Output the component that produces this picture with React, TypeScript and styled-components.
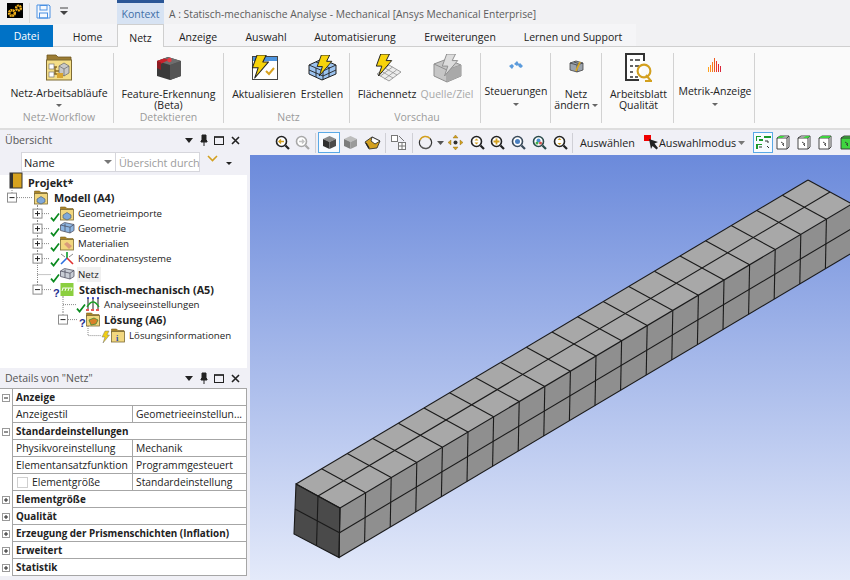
import React from "react";
import styled, { createGlobalStyle } from "styled-components";

const Global = createGlobalStyle`
  html, body { margin: 0; padding: 0; width: 850px; height: 580px; overflow: hidden; background: #f0f0f6; }
  body { font-family: "Open Sans", "Noto Sans", "Liberation Sans", sans-serif; font-size: 11px; color: #222; }
  * { box-sizing: border-box; }
`;

const Page = styled.div`width:850px;height:580px;display:flex;flex-direction:column;overflow:hidden;`;

/* ---------- title bar ---------- */
const TitleBar = styled.div`height:24px;display:flex;align-items:stretch;background:#f1f1f3;`;
const Quick = styled.div`width:117px;display:flex;align-items:flex-start;padding:3px 0 0 7px;gap:6px;`;
const QuickSep = styled.div`width:1px;height:20px;background:#dcdcdc;`;
const ContextTab = styled.div`width:47px;background:#d7e3f3;border-top:3px solid #2b5797;color:#3f6fa8;font-size:10.5px;display:flex;align-items:center;justify-content:center;padding-top:1px;`;
const TitleText = styled.div`margin-left:5px;color:#5c5c5c;font-size:10.3px;line-height:29px;`;

/* ---------- tabs ---------- */
const TabBar = styled.div`height:23px;display:flex;background:#f1f1f3;border-bottom:1px solid #cfcfcf;`;
const FileTab = styled.div`width:53px;height:22px;margin-top:1px;background:#0072c6;color:#fff;display:flex;align-items:center;justify-content:center;font-size:10.5px;`;
const Tab = styled.div<{ $w: number; $active?: boolean; $pl?: number }>`
  width:${p => p.$w}px;height:${p => (p.$active ? 23 : 22)}px;display:flex;align-items:center;justify-content:center;font-size:10.5px;color:#222;
  padding-top:3px;padding-left:${p => p.$pl ?? 0}px;
  background:${p => (p.$active ? "#fafafa" : "#f5f5f7")};
  ${p => (p.$active ? "border:1px solid #cfcfcf;border-bottom:none;z-index:1;" : "")}
`;

/* ---------- ribbon ---------- */
const Ribbon = styled.div`height:83px;background:#fafafa;border-bottom:2px solid #dedede;padding-top:6px;display:flex;align-items:flex-start;`;
const Group = styled.div<{ $w: number; $pad?: number }>`
  width:${p => p.$w}px;height:70px;border-right:1px solid #d2d2d2;display:flex;flex-direction:column;padding-left:${p => p.$pad ?? 0}px;
`;
const GroupItems = styled.div`height:58px;display:flex;`;
const GroupLabel = styled.div`height:12px;line-height:12px;text-align:center;color:#9a9a9a;font-size:10.5px;`;
const RBtn = styled.div<{ $w: number; $off?: boolean }>`
  width:${p => p.$w}px;display:flex;flex-direction:column;align-items:center;color:${p => (p.$off ? "#a8a8a8" : "#222")};
`;
const RIcon = styled.div<{ $lift?: number }>`height:36px;width:100%;display:flex;align-items:center;justify-content:center;padding-bottom:${p => p.$lift ?? 6}px;`;
const RLabel = styled.div`font-size:10.5px;line-height:11px;text-align:center;white-space:nowrap;`;
const Caret = styled.span`display:inline-block;width:0;height:0;border-left:3px solid transparent;border-right:3px solid transparent;border-top:3px solid #666;vertical-align:2px;margin-left:2px;`;
const CaretLine = styled.div`height:15px;padding-right:2px;display:flex;align-items:center;justify-content:center;`;

/* ---------- body ---------- */
const Body = styled.div`flex:1;display:flex;min-height:0;`;
const LeftCol = styled.div`width:250px;display:flex;flex-direction:column;padding:0 3px 4px 0;`;
const PanelHead = styled.div`height:20px;display:flex;align-items:center;padding-left:5px;color:#555;font-size:10.5px;background:#f0f0f6;flex:none;`;
const Grip = styled.div`flex:1;height:5px;margin:0 2px 0 5px;background-image:radial-gradient(#bdbdc4 .6px,transparent .7px);background-size:2px 2px;`;
const HeadBtns = styled.div`display:flex;align-items:center;width:62px;justify-content:space-between;padding-right:7px;`;
const SearchBar = styled.div`height:25px;display:flex;align-items:flex-start;padding-top:2px;background:#f0f0f6;flex:none;`;
const VGrip = styled.div`width:6px;height:18px;margin:1px 5px 0 10px;background-image:radial-gradient(#bdbdc4 .6px,transparent .7px);background-size:2px 2px;`;
const Combo = styled.div`width:95px;height:20px;background:#fff;border:1px solid #d6d6dc;display:flex;align-items:center;justify-content:space-between;padding:0 3px 0 2px;font-size:11px;`;
const SearchInput = styled.div`width:84px;height:20px;background:#fff;border:1px solid #d6d6dc;border-left:none;color:#9c9c9c;font-size:10.8px;display:flex;align-items:center;padding-left:3px;white-space:nowrap;overflow:hidden;`;
const SearchTools = styled.div`display:flex;align-items:flex-start;padding:3px 0 0 7px;gap:8px;`;
const Tree = styled.div`flex:1;background:#fff;min-height:0;`;
const TreeRow = styled.div`height:15.25px;display:flex;align-items:center;`;
const Gutter = styled.svg`flex:none;height:15.25px;overflow:visible;display:block;`;
const TreeLabel = styled.span<{ $bold?: boolean; $hi?: boolean }>`
  font-size:${p => (p.$bold ? 10.8 : 9.7)}px;font-weight:${p => (p.$bold ? 700 : 400)};white-space:nowrap;color:#222;line-height:15px;
  ${p => (p.$hi ? "background:#f0f0f0;margin-left:-1px;padding:0 2px 0 1px;" : "")}
`;
const DetailsGap = styled.div`height:4px;background:#fff;flex:none;`;
const Details = styled.div`display:flex;flex-direction:column;border-top:1px solid #a6a6a6;background:#fff;flex:none;`;
const DRow = styled.div`height:17px;display:flex;`;
const DGutter = styled.div`width:12px;background:#fff;display:flex;align-items:center;padding-left:2px;flex:none;`;
const DHead = styled.div<{ $ls?: number }>`flex:1;border:1px solid #a6a6a6;border-width:0 1px 1px 1px;font-weight:700;font-size:9.9px;padding-left:3px;line-height:16px;white-space:nowrap;letter-spacing:${p => p.$ls ?? 0}px;`;
const DKey = styled.div`width:121px;border:1px solid #a6a6a6;border-width:0 1px 1px 1px;font-size:10.4px;padding-left:3px;line-height:16px;white-space:nowrap;display:flex;align-items:center;overflow:hidden;`;
const DVal = styled.div`flex:1;border:1px solid #a6a6a6;border-width:0 1px 1px 0;font-size:10.3px;padding-left:3px;line-height:16px;white-space:nowrap;overflow:hidden;`;
const CheckBox = styled.span`width:11px;height:11px;border:1px solid #cfcfcf;background:#fff;margin-right:4px;margin-left:1px;flex:none;`;
const BoxMark = styled.svg`display:block;`;

const RightCol = styled.div`flex:1;display:flex;flex-direction:column;min-width:0;`;
const Toolbar = styled.div`height:25px;flex:none;background:#f0f0f6;display:flex;align-items:center;`;
const TCell = styled.div<{ $w: number; $sel?: boolean }>`
  width:${p => p.$w}px;height:21px;flex:none;display:flex;align-items:center;justify-content:center;
  ${p => (p.$sel ? "border:1px solid #5aa9e6;background:#f8fbff;" : "")}
`;
const TSep = styled.div`width:1px;height:20px;background:#d0d0d6;flex:none;`;
const TGrip = styled.div`width:6px;height:18px;flex:none;margin:0 6px 0 10px;background-image:radial-gradient(#bdbdc4 .6px,transparent .7px);background-size:2px 2px;`;
const TText = styled.div<{ $w: number }>`width:${p => p.$w}px;flex:none;font-size:10.8px;color:#222;white-space:nowrap;display:flex;align-items:center;`;
const Viewport = styled.div`flex:1;background:linear-gradient(180deg,#6b8adb 0%,#e4eafa 100%);min-height:0;`;
const Scene = styled.svg`display:block;width:600px;height:425px;`;

/* ---------- icons: ribbon ---------- */
const Bolt = ({ x = 0, y = 0, s = 1, gray = false }: { x?: number; y?: number; s?: number; gray?: boolean }) => (
  <path transform={`translate(${x} ${y}) scale(${s})`} d="M7 0h8l-3 6h5L5 20l3-9H3z" fill={gray ? "#dcdcdc" : "#f7d30b"} stroke={gray ? "#8f8f8f" : "#222"} strokeWidth=".9" strokeLinejoin="round" />
);

const IcoWorkflow = () => (
  <svg width="28" height="29" viewBox="0 0 28 29">
    <path d="M2 5V2h9l2 2h13v5H2z" fill="#9c7c33" stroke="#6e5620" strokeWidth=".8" />
    <rect x="1.5" y="7" width="25" height="20" fill="#f4de88" stroke="#7d6a35" />
    <path d="M7 14h5M7 21h5M10 14v7M10 18h4" stroke="#8a6a20" strokeWidth="1.4" fill="none" />
    <rect x="4" y="11" width="5" height="5" fill="#fff" stroke="#777" strokeWidth=".7" />
    <rect x="4" y="19" width="5" height="5" fill="#fff" stroke="#777" strokeWidth=".7" />
    <path d="M14 13l5-3 5 3v7l-5 3-5-3z" fill="#c8c8c8" stroke="#666" strokeWidth=".7" />
    <path d="M14 13l5 3 5-3M19 16v7" stroke="#666" strokeWidth=".7" fill="none" />
    <rect x="12" y="20" width="6" height="5" fill="#d9a531" />
  </svg>
);
const IcoFeature = () => (
  <svg width="26" height="25" viewBox="0 0 26 25">
    <path d="M1 5l11-4 13 4v15l-11 4-13-4z" fill="#3a3a3a" />
    <path d="M14 9l11-4v15l-11 4z" fill="#555" />
    <path d="M1 5l11-4 13 4-11 4z" fill="#6e6e6e" />
    <path d="M1 5l7-2.6 5 1.4-8 4L1 11z" fill="#c8202a" />
    <circle cx="13.5" cy="4" r="2.2" fill="#e53a42" />
    <path d="M1 5l4 1.5V14L1 12z" fill="#8f1c22" />
  </svg>
);
const IcoUpdate = () => (
  <svg width="30" height="27" viewBox="0 0 30 27">
    <rect x="3.5" y="1.5" width="25" height="23" fill="#fff" stroke="#444" />
    <rect x="4" y="2" width="24" height="4" fill="#4d95e0" />
    <path d="M17 16l3 3 5-6" fill="none" stroke="#d8a11f" strokeWidth="2" />
    <Bolt x={0} y={0} s={1.15} />
  </svg>
);
const IcoCreate = () => (
  <svg width="29" height="27" viewBox="0 0 29 27">
    <path d="M1 10l13-6 14 6v9l-14 6-13-6z" fill="#9cc3ef" stroke="#222" />
    <path d="M1 10l14 6 13-6M15 16v9M8 7l14 6M8 13v9M21 13v9M1 15l14 6 13-6" stroke="#222" strokeWidth=".9" fill="none" />
    <Bolt x={6} y={0} s={1.05} />
  </svg>
);
const IcoFace = () => (
  <svg width="29" height="28" viewBox="0 0 29 28">
    <path d="M4 20L16 11l12 7-12 9z" fill="#ececec" stroke="#888" strokeWidth=".8" />
    <path d="M8 17l12 7M12 14l12 7M7.5 22l12-9M11.5 25l12-9" stroke="#888" strokeWidth=".7" fill="none" />
    <Bolt x={0} y={0} s={1.1} />
  </svg>
);
const IcoSource = () => (
  <svg width="29" height="29" viewBox="0 0 29 29">
    <path d="M1 10l13-5 14 6v11l-14 6-13-6z" fill="#c6c6c6" stroke="#8f8f8f" />
    <path d="M1 10l13 6 14-5M14 16v12" fill="none" stroke="#8f8f8f" />
    <path d="M14 16l14-5v11l-14 6z" fill="#a9a9a9" />
    <Bolt x={6} y={0} s={1.1} gray />
  </svg>
);
const IcoControls = () => (
  <svg width="14" height="10" viewBox="0 0 14 10">
    <path d="M0 6l3-2 2 2-2 3zM5 4l3-3 2 3-2 2zM9 5l2-2 3 3-2 2-2-1z" fill="#5b9bdc" />
  </svg>
);
const IcoMeshEdit = () => (
  <svg width="15" height="13" viewBox="0 0 15 13">
    <path d="M1 3l6-2 7 2v7l-6 2-7-2z" fill="#9ba3ad" stroke="#444" strokeWidth=".8" />
    <path d="M1 3l7 2 6-2M8 5v7M5 2l6 2" stroke="#333" strokeWidth=".7" fill="none" />
    <path d="M7 11l4-9" stroke="#dba81f" strokeWidth="1.8" />
  </svg>
);
const IcoSheet = () => (
  <svg width="29" height="30" viewBox="0 0 29 30">
    <path d="M20 8V1H2v26h13" fill="#fff" stroke="#333" strokeWidth="2" />
    <path d="M6 7h3M6 13h3M6 19h3M6 24h3M11 7h5M11 13h4M11 24h3" stroke="#333" strokeWidth="1.6" />
    <circle cx="20" cy="18" r="6.4" fill="none" stroke="#d3a01f" strokeWidth="2.1" />
    <path d="M22 22l5 6M21 28h7" stroke="#d3a01f" strokeWidth="2" />
  </svg>
);
const IcoMetric = () => (
  <svg width="14" height="14" viewBox="0 0 14 14">
    {[[0.5, 9, "#ffa21e"], [2.5, 7, "#ff8f1e"], [4.5, 4, "#f57d1c"], [6.5, 0, "#ee5a1d"], [8.5, 3, "#e8402a"], [10.5, 6, "#e02a34"], [12.5, 8, "#d9263a"]].map(([x, y, c]) => (
      <path key={String(x)} d={`M${x} ${y}V14`} stroke={c as string} strokeWidth="1" />
    ))}
  </svg>
);

/* ---------- icons: top ---------- */
const IcoLogo = () => (
  <svg width="16" height="15" viewBox="0 0 16 15">
    <rect width="16" height="15" fill="#000" />
    <circle cx="5" cy="10" r="2.8" fill="none" stroke="#f0ae18" strokeWidth="2.6" strokeDasharray="1.8 .5" />
    <circle cx="11.5" cy="5" r="2.4" fill="none" stroke="#f0ae18" strokeWidth="2.4" strokeDasharray="1.7 .5" />
  </svg>
);
const SaveSvg = styled.svg`margin-top:1px;`;
const QuickArrowSvg = styled.svg`margin:4px 0 0 3px;`;
const IcoSave = () => (
  <SaveSvg width="15" height="15" viewBox="0 0 15 15">
    <path d="M1 1h12l1 1v12H1z" fill="#f5f9fe" stroke="#4a90e2" />
    <rect x="4" y="1.5" width="7" height="4.5" fill="none" stroke="#4a90e2" />
    <rect x="3.5" y="9" width="8" height="5" fill="none" stroke="#4a90e2" />
  </SaveSvg>
);
const IcoQuickArrow = () => (
  <QuickArrowSvg width="8" height="10" viewBox="0 0 8 10">
    <path d="M0 1h8" stroke="#444" strokeWidth="1" />
    <path d="M0 4h8L4 8z" fill="#444" />
  </QuickArrowSvg>
);

/* ---------- icons: panel header ---------- */
const HeadIcons = () => (
  <HeadBtns>
    <svg width="8" height="5" viewBox="0 0 8 5"><path d="M0 0h8L4 5z" fill="#222" /></svg>
    <svg width="8" height="12" viewBox="0 0 8 12"><path d="M2 1h4v5l1 1v1H1V7l1-1zM4 8v4" fill="#222" stroke="#222" /></svg>
    <svg width="10" height="9" viewBox="0 0 10 9"><rect x=".5" y="1" width="9" height="7.5" fill="none" stroke="#222" /><path d="M0 1h10" stroke="#222" strokeWidth="1.4" /></svg>
    <svg width="9" height="9" viewBox="0 0 9 9"><path d="M1 1l7 7M8 1l-7 7" stroke="#222" strokeWidth="1.6" /></svg>
  </HeadBtns>
);

/* ---------- icons: tree (drawn inside a row's gutter) ---------- */
const CY = 7.6;
const Dot = ({ d }: { d: string }) => <path d={d} stroke="#8a8a8a" strokeWidth="1" strokeDasharray="1 1" fill="none" />;
const Exp = ({ x, minus }: { x: number; minus?: boolean }) => (
  <g>
    <rect x={x - 4.5} y={CY - 4.5} width="9" height="9" fill="#fff" stroke="#8c8c8c" />
    <path d={`M${x - 2.5} ${CY}h5`} stroke="#222" />
    {!minus && <path d={`M${x} ${CY - 2.5}v5`} stroke="#222" />}
  </g>
);
const Check = ({ x }: { x: number }) => (
  <path d={`M${x} ${CY + 4}l2.6 3 5.4-7`} fill="none" stroke="#0a8a1e" strokeWidth="1.7" />
);
const Q = ({ x }: { x: number }) => (
  <text x={x} y={CY + 7} fontSize="11" fontWeight="700" fill="#1f2f8f" fontFamily="'Liberation Sans',sans-serif">?</text>
);
const Folder = ({ x, inner }: { x: number; inner: React.ReactNode }) => (
  <g transform={`translate(${x} 0)`}>
    <path d="M.5 3V1h5l1.5 1.5h6V5H.5z" fill="#a98429" stroke="#7c6120" strokeWidth=".6" />
    <rect x=".5" y="3.5" width="13" height="10.5" fill="#f2d77e" stroke="#7c6a35" strokeWidth=".8" />
    {inner}
  </g>
);
const Cube = ({ x, fill = "#8eb6e2" }: { x: number; fill?: string }) => (
  <g transform={`translate(${x} 0)`}>
    <path d="M.5 4l4-2.5L14 3.5v6L10 12 .5 9.5z" fill={fill} stroke="#556" strokeWidth=".8" />
    <path d="M.5 4l9.5 2.2L14 3.5M10 6.2V12M5 2.5v8" stroke="#445" strokeWidth=".7" fill="none" />
  </g>
);
const SmallCube = () => <path d="M3 9l4-2.5 4 2.5v3l-4 2-4-2z" fill="#7fa9d9" stroke="#456" strokeWidth=".6" />;
const CoordIcon = ({ x }: { x: number }) => (
  <g transform={`translate(${x} 0)`} strokeWidth="1.6" fill="none">
    <path d="M7 7V1" stroke="#0a9a2a" />
    <path d="M7 7L1 13" stroke="#2b6fe0" />
    <path d="M7 7l6 6" stroke="#e03030" />
    <path d="M1 3l4 3M13 3L9 6" stroke="#888" strokeWidth="1" />
  </g>
);
const StaticIcon = ({ x }: { x: number }) => (
  <g transform={`translate(${x} 0)`}>
    <rect x=".5" y="1" width="13" height="13" fill="#8bcf3f" />
    <path d="M3 6l-1 3M6 6L5 9M9 6L8 9M12 6l-1 3M2.500 6h10" stroke="#fff" strokeWidth=".9" fill="none" />
  </g>
);
const AnalysisIcon = ({ x }: { x: number }) => (
  <g transform={`translate(${x} 0)`}>
    <path d="M2 1v11M7 1v11M12 1v11" stroke="#222" strokeWidth="1" />
    <path d="M1 1h2M6 1h2M11 1h2" stroke="#2030c0" strokeWidth="1.6" />
    <path d="M1 10Q7 0 13 10" stroke="#1fa02a" strokeWidth="1.3" fill="none" />
    <path d="M0 13h14" stroke="#e02020" strokeWidth="1.6" strokeDasharray="3 2" />
  </g>
);
const InfoMark = () => (
  <text x="5" y="12.5" fontSize="8.5" fontWeight="700" fill="#2a4fb0" fontFamily="'Liberation Serif',serif">i</text>
);
const MiniBolt = ({ x }: { x: number }) => (
  <path transform={`translate(${x} 1)`} d="M4 2h4L6 6h2.500L2 14l2-6H1z" fill="#f1cf14" stroke="#777" strokeWidth=".5" />
);

type RowDef = { w: number; text: string; bold?: boolean; hi?: boolean; draw: React.ReactNode };
const rows: RowDef[] = [
  { w: 28, text: "Projekt*", bold: true, draw: <g><rect x="10" y="-2" width="12" height="15" fill="#d6a21f" stroke="#333" /><rect x="10" y="-2" width="3" height="15" fill="#333" /></g> },
  { w: 54, text: "Modell (A4)", bold: true, draw: <g><Dot d="M12 0v3M17 7.6h15M37.500 13v3" /><Exp x={12} minus /><Folder x={34} inner={<SmallCube />} /></g> },
  { w: 78, text: "Geometrieimporte", draw: <g><Dot d="M37.500 0v16M42 7.6h8" /><Exp x={37.5} /><Check x={51} /><Folder x={60} inner={<SmallCube />} /></g> },
  { w: 78, text: "Geometrie", draw: <g><Dot d="M37.500 0v16M42 7.6h8" /><Exp x={37.5} /><Check x={51} /><Cube x={60} /></g> },
  { w: 78, text: "Materialien", draw: <g><Dot d="M37.500 0v16M42 7.6h8" /><Exp x={37.5} /><Check x={51} /><Folder x={60} inner={<path d="M4 8l5 5 3-3-5-4z" fill="#d99a7a" />} /></g> },
  { w: 78, text: "Koordinatensysteme", draw: <g><Dot d="M37.500 0v16M42 7.6h8" /><Exp x={37.5} /><Check x={51} /><CoordIcon x={60} /></g> },
  { w: 78, text: "Netz", hi: true, draw: <g><Dot d="M37.500 0v16M37.500 7.6h13" /><Check x={51} /><Cube x={60} fill="#c9ced6" /></g> },
  { w: 79, text: "Statisch-mechanisch (A5)", bold: true, draw: <g><Dot d="M37.500 0v3M42 7.6h10M63 14v2" /><Exp x={37.5} minus /><Q x={53} /><StaticIcon x={60} /></g> },
  { w: 104, text: "Analyseeinstellungen", draw: <g><Dot d="M63 0v16M63 7.6h13" /><Check x={77} /><AnalysisIcon x={86} /></g> },
  { w: 104, text: "Lösung (A6)", bold: true, draw: <g><Dot d="M63 0v3M68 7.6h10M88 14v2" /><Exp x={63} minus /><Q x={79} /><Folder x={86} inner={<path d="M3 8l5-2 4 2-2 4-5 1z" fill="#d9812a" stroke="#3f8a3a" strokeWidth=".8" />} /></g> },
  { w: 129, text: "Lösungsinformationen", draw: <g><Dot d="M88 0v7.6h13" /><MiniBolt x={101} /><Folder x={111} inner={<InfoMark />} /></g> },
];

/* ---------- toolbar icons ---------- */
const Lens = ({ inner, ring = "#222" }: { inner?: React.ReactNode; ring?: string }) => (
  <svg width="15" height="15" viewBox="0 0 15 15">
    <circle cx="6.5" cy="6.5" r="5" fill="#fff" stroke={ring} strokeWidth="1.6" />
    <path d="M10.5 10.5l3.5 3.5" stroke={ring} strokeWidth="2.2" />
    {inner}
  </svg>
);
const Cube3D = ({ top, side, front }: { top: string; side: string; front: string }) => (
  <svg width="15" height="15" viewBox="0 0 15 15">
    <path d="M1 4l6.5-3L14 4l-6.5 3z" fill={top} />
    <path d="M1 4l6.5 3v7L1 11z" fill={front} />
    <path d="M14 4L7.5 7v7L14 11z" fill={side} />
  </svg>
);
const SelIcon = ({ fill, front }: { fill?: string; front?: boolean }) => (
  <svg width="15" height="15" viewBox="0 0 15 15">
    <path d="M1 3l3-2h9v11l-2 2H1z" fill={front ? "#3fd43f" : "#fff"} stroke="#333" strokeWidth=".9" />
    <path d="M1 3h10v11M11 3l2-2" fill="none" stroke="#333" strokeWidth=".9" />
    {fill && <path d={fill} fill="#3fd43f" />}
    <path d="M5 7l3 2-1.500.5L8 11" stroke="#333" strokeWidth=".9" fill="none" />
  </svg>
);

/* ---------- 3D beam ---------- */
const SEG = 20;
const DX = 25.6, DY = -15.2;
const poly = (a: [number, number][]) => a.map(p => `${p[0]},${p[1]}`).join(" ");
const Beam = () => {
  const A: [number, number] = [296, 484];
  const B: [number, number] = [340, 508];
  const C: [number, number] = [339, 557.5];
  const D: [number, number] = [294, 534];
  const M: [number, number] = [318, 496];
  const side = Array.from({ length: SEG + 1 }, (_, i) => [B[0] + DX * i, B[1] + DY * i] as [number, number]);
  return (
    <Scene viewBox="250 155 600 425">
      <polygon points={poly([A, B, [B[0] + DX * SEG, B[1] + DY * SEG], [A[0] + DX * SEG, A[1] + DY * SEG]])} fill="#a8a8a8" />
      <polygon points={poly([B, C, [C[0] + DX * SEG, C[1] + DY * SEG], [B[0] + DX * SEG, B[1] + DY * SEG]])} fill="#8f8f8f" />
      <polygon points={poly([A, B, C, D])} fill="#4a4a4a" />
      <g stroke="#1a1a1a" strokeWidth="1.1" fill="none">
        {Array.from({ length: SEG + 1 }, (_, i) => (
          <line key={`c${i}`} x1={A[0] + DX * i} y1={A[1] + DY * i} x2={B[0] + DX * i} y2={B[1] + DY * i} />
        ))}
        {side.map((p, i) => (
          <line key={`v${i}`} x1={p[0]} y1={p[1]} x2={p[0] - 1} y2={p[1] + 49.5} />
        ))}
        <line x1={A[0]} y1={A[1]} x2={A[0] + DX * SEG} y2={A[1] + DY * SEG} />
        <line x1={M[0]} y1={M[1]} x2={M[0] + DX * SEG} y2={M[1] + DY * SEG} />
        <line x1={B[0]} y1={B[1]} x2={B[0] + DX * SEG} y2={B[1] + DY * SEG} />
        <line x1={339.5} y1={532.7} x2={339.5 + DX * SEG} y2={532.7 + DY * SEG} />
        <line x1={C[0]} y1={C[1]} x2={C[0] + DX * SEG} y2={C[1] + DY * SEG} />
        <polygon points={poly([A, B, C, D])} />
        <line x1={295} y1={509} x2={339.5} y2={532.7} />
        <line x1={318} y1={496} x2={316.5} y2={546} />
      </g>
    </Scene>
  );
};

const PlusMinus = ({ minus }: { minus?: boolean }) => (
  <BoxMark width="8" height="8" viewBox="0 0 8 8">
    <rect x=".5" y=".5" width="7" height="7" fill="#fff" stroke="#999" />
    <path d="M2 4h4" stroke="#222" />
    {!minus && <path d="M4 2v4" stroke="#222" />}
  </BoxMark>
);

export default function App() {
  return (
    <Page>
      <Global />
      <TitleBar>
        <Quick>
          <IcoLogo />
          <QuickSep />
          <IcoSave />
          <IcoQuickArrow />
        </Quick>
        <ContextTab>Kontext</ContextTab>
        <TitleText>A : Statisch-mechanische Analyse - Mechanical [Ansys Mechanical Enterprise]</TitleText>
      </TitleBar>
      <TabBar>
        <FileTab>Datei</FileTab>
        <Tab $w={64} $pl={5}>Home</Tab>
        <Tab $w={47} $active>Netz</Tab>
        <Tab $w={68}>Anzeige</Tab>
        <Tab $w={68}>Auswahl</Tab>
        <Tab $w={110}>Automatisierung</Tab>
        <Tab $w={100}>Erweiterungen</Tab>
        <Tab $w={126}>Lernen und Support</Tab>
      </TabBar>
      <Ribbon>
        <Group $w={114} $pad={5}>
          <GroupItems>
            <RBtn $w={108}>
              <RIcon><IcoWorkflow /></RIcon>
              <RLabel>Netz-Arbeitsabläufe</RLabel>
              <CaretLine><Caret /></CaretLine>
            </RBtn>
          </GroupItems>
          <GroupLabel>Netz-Workflow</GroupLabel>
        </Group>
        <Group $w={110}>
          <GroupItems>
            <RBtn $w={110}>
              <RIcon><IcoFeature /></RIcon>
              <RLabel>Feature-Erkennung<br />(Beta)</RLabel>
            </RBtn>
          </GroupItems>
          <GroupLabel>Detektieren</GroupLabel>
        </Group>
        <Group $w={126} $pad={4}>
          <GroupItems>
            <RBtn $w={72}><RIcon><IcoUpdate /></RIcon><RLabel>Aktualisieren</RLabel></RBtn>
            <RBtn $w={44}><RIcon><IcoCreate /></RIcon><RLabel>Erstellen</RLabel></RBtn>
          </GroupItems>
          <GroupLabel>Netz</GroupLabel>
        </Group>
        <Group $w={131} $pad={4}>
          <GroupItems>
            <RBtn $w={66}><RIcon><IcoFace /></RIcon><RLabel>Flächennetz</RLabel></RBtn>
            <RBtn $w={54} $off><RIcon><IcoSource /></RIcon><RLabel>Quelle/Ziel</RLabel></RBtn>
          </GroupItems>
          <GroupLabel>Vorschau</GroupLabel>
        </Group>
        <Group $w={70} $pad={1}>
          <GroupItems>
            <RBtn $w={68}><RIcon $lift={9}><IcoControls /></RIcon><RLabel>Steuerungen</RLabel><CaretLine><Caret /></CaretLine></RBtn>
          </GroupItems>
        </Group>
        <Group $w={51}>
          <GroupItems>
            <RBtn $w={50}><RIcon $lift={10}><IcoMeshEdit /></RIcon><RLabel>Netz<br />ändern<Caret /></RLabel></RBtn>
          </GroupItems>
        </Group>
        <Group $w={72} $pad={2}>
          <GroupItems>
            <RBtn $w={70}><RIcon><IcoSheet /></RIcon><RLabel>Arbeitsblatt<br />Qualität</RLabel></RBtn>
          </GroupItems>
        </Group>
        <Group $w={81} $pad={2}>
          <GroupItems>
            <RBtn $w={78}><RIcon $lift={9}><IcoMetric /></RIcon><RLabel>Metrik-Anzeige</RLabel><CaretLine><Caret /></CaretLine></RBtn>
          </GroupItems>
        </Group>
      </Ribbon>
      <Body>
        <LeftCol>
          <PanelHead>Übersicht<Grip /><HeadIcons /></PanelHead>
          <SearchBar>
            <VGrip />
            <Combo>Name<svg width="8" height="4" viewBox="0 0 8 4"><path d="M0 0h8L4 4z" fill="#777" /></svg></Combo>
            <SearchInput>Übersicht durch</SearchInput>
            <SearchTools>
              <svg width="11" height="7" viewBox="0 0 11 7"><path d="M1 1l4.500 4.500L10 1" fill="none" stroke="#d3a01f" strokeWidth="1.6" /></svg>
              <svg width="6" height="10" viewBox="0 0 6 10"><path d="M0 7h6L3 10z" fill="#222" /></svg>
            </SearchTools>
          </SearchBar>
          <Tree>
            {rows.map(r => (
              <TreeRow key={r.text}>
                <Gutter width={r.w} viewBox={`0 0 ${r.w} 15.25`}>{r.draw}</Gutter>
                <TreeLabel $bold={r.bold} $hi={r.hi}>{r.text}</TreeLabel>
              </TreeRow>
            ))}
          </Tree>
          <DetailsGap />
          <PanelHead>Details von "Netz"<Grip /><HeadIcons /></PanelHead>
          <Details>
            <DRow><DGutter><PlusMinus minus /></DGutter><DHead $ls={0.1}>Anzeige</DHead></DRow>
            <DRow><DGutter /><DKey>Anzeigestil</DKey><DVal>Geometrieeinstellun...</DVal></DRow>
            <DRow><DGutter><PlusMinus minus /></DGutter><DHead>Standardeinstellungen</DHead></DRow>
            <DRow><DGutter /><DKey>Physikvoreinstellung</DKey><DVal>Mechanik</DVal></DRow>
            <DRow><DGutter /><DKey>Elementansatzfunktion</DKey><DVal>Programmgesteuert</DVal></DRow>
            <DRow><DGutter /><DKey><CheckBox />Elementgröße</DKey><DVal>Standardeinstellung</DVal></DRow>
            <DRow><DGutter><PlusMinus /></DGutter><DHead>Elementgröße</DHead></DRow>
            <DRow><DGutter><PlusMinus /></DGutter><DHead>Qualität</DHead></DRow>
            <DRow><DGutter><PlusMinus /></DGutter><DHead>Erzeugung der Prismenschichten (Inflation)</DHead></DRow>
            <DRow><DGutter><PlusMinus /></DGutter><DHead>Erweitert</DHead></DRow>
            <DRow><DGutter><PlusMinus /></DGutter><DHead>Statistik</DHead></DRow>
          </Details>
        </LeftCol>
        <RightCol>
          <Toolbar>
            <TGrip />
            <TCell $w={20}><Lens inner={<path d="M9 6.500H4M6 4.500l-2 2 2 2" stroke="#d3a01f" strokeWidth="1.4" fill="none" />} /></TCell>
            <TCell $w={20}><Lens ring="#a8a8a8" inner={<path d="M4 6.500h5M7 4.500l2 2-2 2" stroke="#c4c4c4" strokeWidth="1.4" fill="none" />} /></TCell>
            <TCell $w={6}><TSep /></TCell>
            <TCell $w={22} $sel><Cube3D top="#8a8a8a" side="#4a4a4a" front="#2f2f2f" /></TCell>
            <TCell $w={21}><Cube3D top="#bdbdbd" side="#9a9a9a" front="#7d7d7d" /></TCell>
            <TCell $w={22}><svg width="17" height="15" viewBox="0 0 17 15"><path d="M1 7l7-5 8 4-3 7-8 1z" fill="#d3a01f" stroke="#222" strokeWidth=".8" /><path d="M8 2l8 4-5 3-4-3z" fill="#fff" stroke="#222" strokeWidth=".8" /><path d="M2 8l3 5" stroke="#222" strokeWidth="1.4" /></svg></TCell>
            <TCell $w={4}><TSep /></TCell>
            <TCell $w={23}><svg width="15" height="15" viewBox="0 0 15 15"><rect x=".5" y=".5" width="6" height="6" fill="#fff" stroke="#777" /><rect x="7.500" y="7.500" width="7" height="7" fill="#fff" stroke="#777" /><path d="M11 7.500v7M7.500 11h7M8 1l5 5" stroke="#777" /></svg></TCell>
            <TCell $w={4}><TSep /></TCell>
            <TCell $w={22}><svg width="15" height="15" viewBox="0 0 15 15"><path d="M2 5a6 6 0 0 1 10-1.500" fill="none" stroke="#d3a01f" strokeWidth="1.5" /><path d="M13 10a6 6 0 0 1-10 1.500" fill="none" stroke="#555" strokeWidth="1.5" /><path d="M2 5a6 6 0 0 0 1 6.500M13 10a6 6 0 0 0-1-6.500" fill="none" stroke="#333" strokeWidth="1.2" /></svg></TCell>
            <TCell $w={8}><svg width="7" height="4" viewBox="0 0 7 4"><path d="M0 0h7L3.500 4z" fill="#555" /></svg></TCell>
            <TCell $w={23}><svg width="15" height="15" viewBox="0 0 15 15"><path d="M7.500 0l2.500 3H5zM7.500 15L5 12h5zM0 7.500L3 5v5zM15 7.500L12 5v5z" fill="#d3a01f" stroke="#8a6a10" strokeWidth=".4" /><circle cx="7.500" cy="7.500" r="2" fill="#333" /></svg></TCell>
            <TCell $w={20}><Lens inner={<path d="M6.500 3.500l-2 2h4zM6.500 9.500l-2-2h4z" fill="#d3a01f" />} /></TCell>
            <TCell $w={21}><Lens inner={<path d="M6.500 3.500v6M3.500 6.500h6" stroke="#d3a01f" strokeWidth="1.8" />} /></TCell>
            <TCell $w={21}><Lens ring="#3a4a5a" inner={<circle cx="6.500" cy="6.500" r="2.500" fill="#4a7fc0" />} /></TCell>
            <TCell $w={21}><Lens ring="#2a4a4a" inner={<g><circle cx="6.500" cy="5.500" r="2" fill="#4a90d0" /><circle cx="5" cy="8" r="1.500" fill="#3fae4a" /><circle cx="8.500" cy="8" r="1.500" fill="#d0504a" /></g>} /></TCell>
            <TCell $w={21}><Lens inner={<path d="M6.500 3l-2 2h4zM6.500 10l-2-2h4z" fill="#d3a01f" />} /></TCell>
            <TCell $w={1} />
            <TCell $w={1}><TSep /></TCell>
            <TCell $w={7} />
            <TText $w={63}>Auswählen</TText>
            <TCell $w={16}><svg width="15" height="15" viewBox="0 0 15 15"><rect x="0" y="0" width="7" height="6" fill="#f00000" /><path d="M5 4l9 3-3.500 1.500L14 13l-1.500 1.500L8.500 11 7 14z" fill="#222" /></svg></TCell>
            <TText $w={79}>Auswahlmodus</TText>
            <TCell $w={7}><svg width="7" height="4" viewBox="0 0 7 4"><path d="M0 0h7L3.500 4z" fill="#777" /></svg></TCell>
            <TCell $w={8} />
            <TCell $w={20} $sel><svg width="16" height="15" viewBox="0 0 16 15"><path d="M0 1h6v1H2v4H1V1zM9 1h7v2H9zM1 9h6v1H3v4H1zM4 4h4v2H4z" fill="#1a9a2a" /><path d="M10 6h3v2M4 12h3M12 11l2 2" stroke="#333" fill="none" /></svg></TCell>
            <TCell $w={21}><SelIcon fill="M1 3l3-2h5l-3 2z" /></TCell>
            <TCell $w={21}><SelIcon fill="M6 3l3-2h4l-2 2z" /></TCell>
            <TCell $w={20}><SelIcon fill="M1 3l3-2h9l-2 2z" /></TCell>
            <TCell $w={24}><SelIcon front /></TCell>
          </Toolbar>
          <Viewport><Beam /></Viewport>
        </RightCol>
      </Body>
    </Page>
  );
}
